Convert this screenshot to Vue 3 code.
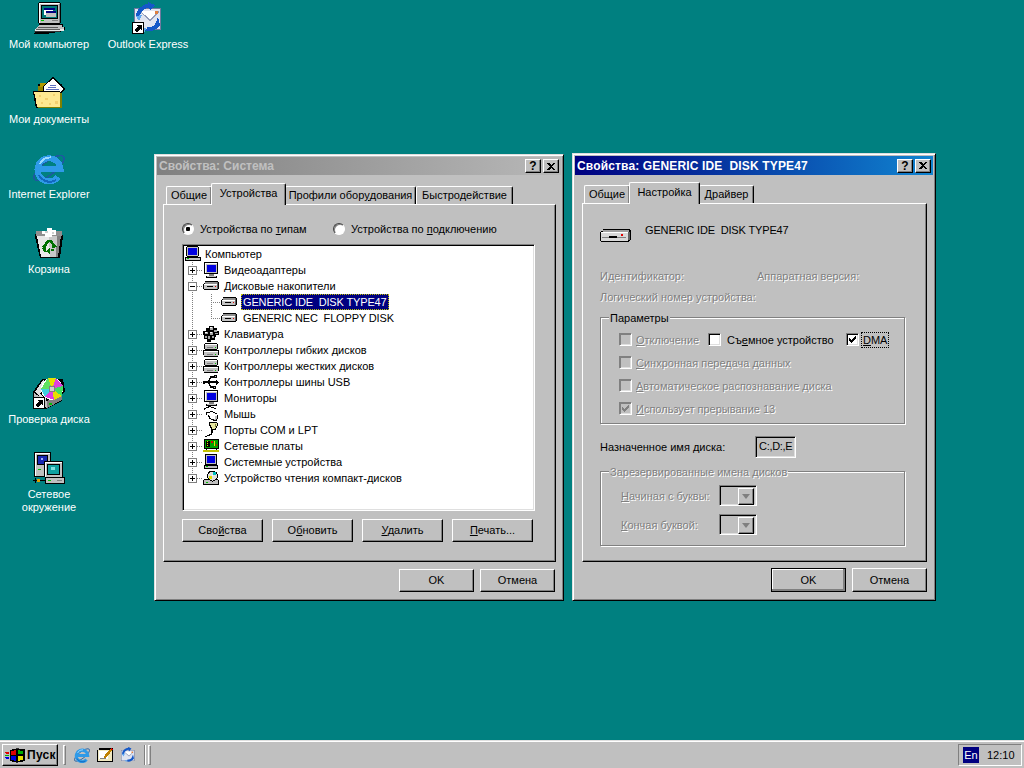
<template>
  <div class="screen">
    <svg class="sprites" aria-hidden="true">
      <defs>
        <symbol id="i-root" viewBox="0 0 16 16">
          <path fill="#000" d="M2 0h11v1h1v9h-1v1H2v-1H1V1h1z"/>
          <path fill="#c0c0c0" d="M2 1h11v9H2z"/>
          <path fill="#0000e0" d="M3 2h9v7H3z"/>
          <path fill="#000" d="M0 11h16v4H0z"/>
          <path fill="#c0c0c0" d="M1 12h14v2H1z"/>
          <path fill="#00c000" d="M2 12h2v1H2z"/>
        </symbol>
        <symbol id="i-monitor" viewBox="0 0 16 16">
          <path fill="#000" d="M1 0h14v12H1z"/>
          <path fill="#c0c0c0" d="M2 1h12v10H2z"/>
          <path fill="#fff" d="M2 1h12v1H3v9H2z"/>
          <path fill="#0000e0" d="M4 3h9v7H4z"/>
          <path fill="#808080" d="M6 12h5v2H6z"/>
          <path fill="#000" d="M3 14h11v2H3z"/>
          <path fill="#c0c0c0" d="M4 14h9v1H4z"/>
        </symbol>
        <symbol id="i-sys" viewBox="0 0 16 16">
          <path fill="#000" d="M2 0h12v11H2z"/>
          <path fill="#c0c0c0" d="M3 1h10v9H3z"/>
          <path fill="#0000e0" d="M4 2h8v7H4z"/>
          <path fill="#000" d="M1 11h14v4H1z"/>
          <path fill="#c0c0c0" d="M2 12h12v2H2z"/>
          <path fill="#00c000" d="M3 12h2v1H3z"/>
        </symbol>
        <symbol id="i-disk" viewBox="0 0 16 16">
          <path fill="#000" d="M2 3h13v1h1v7h-1v1H1v-1H0V6h1V5h1z"/>
          <path fill="#909090" d="M2 4h12v2H2z"/>
          <path fill="#c4c4c4" d="M1 6h13v5H1z"/>
          <path fill="#fff" d="M1 6h13v1H1z"/>
          <path fill="#606060" d="M14 4h1v7h-1z"/>
          <path fill="#000" d="M4 8h6v1H4z"/>
          <path fill="#e00000" d="M12 8h1v1h-1z"/>
        </symbol>
        <symbol id="i-keyboard" viewBox="0 0 16 16">
          <path fill="#000" d="M6 0h5v2h3v3h2v4h-3v2h-1v3H8v2H4v-3H1V9H0V5h3V2h3z"/>
          <path fill="#a8a8a8" d="M7 1h3v3H7zM11 4h3v2h-3zM2 6h3v2H2zM7 6h3v3H7zM12 7h3v1h-3zM5 10h2v3H5zM9 10h2v2H9zM2 10h2v2H2z"/>
          <path fill="#fff" d="M7 1h2v1H7zM2 6h2v1H2zM7 6h2v1H7z"/>
        </symbol>
        <symbol id="i-ctl" viewBox="0 0 16 16">
          <path fill="#000" d="M2 1h12v1h1v5h-1v1h2v5h-1v2H1v-2H0V8h2V7H1V2h1z"/>
          <path fill="#c0c0c0" d="M2 2h12v5H2zM1 9h14v5H1z"/>
          <path fill="#fff" d="M2 2h12v1H2zM1 9h14v1H1z"/>
          <path fill="#808080" d="M4 5h6v1H4zM4 12h6v1H4z"/>
          <path fill="#00c000" d="M12 5h1v1h-1zM12 12h1v1h-1z"/>
        </symbol>
        <symbol id="i-usb" viewBox="0 0 16 16">
          <path fill="none" stroke="#000" stroke-width="1.400" d="M1 8h14M5 8l3-5h3M5 8l3 5h2"/>
          <path fill="#000" d="M11 1h3v3h-3zM10 12h3v3h-3zM13 6h1v1h1v1h1v1h-1v1h-1v1h-1zM0 7h2v3H0z"/>
          <path fill="#c0c0c0" d="M12 2h1v1h-1zM11 13h1v1h-1z"/>
        </symbol>
        <symbol id="i-mouse" viewBox="0 0 16 16">
          <path fill="none" stroke="#000" d="M1 4C3 0 9 0 13 3"/>
          <path fill="#000" d="M3 6h4v-1h3v1h2v1h2v2h1v4h-1v2h-4v-1H8v-1H6v-2H5V9H3z"/>
          <path fill="#fff" d="M4 7h3V6h3v1h2v1h2v2h0v3h-1v1h-2v-1H8v-1H7v-2H6V9H4z"/>
          <path fill="#c0c0c0" d="M12 10h2v3h-1v1h-2v-1h1z"/>
        </symbol>
        <symbol id="i-port" viewBox="0 0 16 16">
          <path fill="none" stroke="#000" stroke-width="1.200" d="M9 8v3c0 3-3 1-5 3l-2 1"/>
          <path fill="#000" d="M6 0h8v1h1v3h-1v2h-1v2H8V6H7V4H6z"/>
          <path fill="#e8e8a0" d="M7 1h7v3h-1v2h-1v1H9V5H8V3H7z"/>
          <path fill="#808040" d="M12 2h1v3h-1z"/>
        </symbol>
        <symbol id="i-net" viewBox="0 0 16 16">
          <path fill="#000" d="M1 1h15v10h-2v3h-1v-3H4v3H3v-3H1z"/>
          <path fill="#00a000" d="M2 2h13v8H2z"/>
          <path fill="#000" d="M3 3h4v6H3z"/>
          <path fill="#e0e000" d="M4 3h1v1H4zM4 5h1v1H4zM4 7h1v1H4zM11 3h1v5h-1z"/>
          <path fill="#e00000" d="M8 3h2v2H8zM13 6h1v2h-1z"/>
          <path fill="#c0c000" d="M0 12h16v2H0z"/>
        </symbol>
        <symbol id="i-cd" viewBox="0 0 16 16">
          <path fill="#000" d="M1 9h14v1h1v5H0v-5h1z"/>
          <path fill="#c0c0c0" d="M1 10h14v4H1z"/>
          <path fill="#00c000" d="M3 12h2v1H3z"/>
          <circle cx="9.500" cy="6" r="5.500" fill="#000"/>
          <circle cx="9.500" cy="6" r="4.500" fill="#e0e0e0"/>
          <path fill="#00c0c0" d="M10 2h3v3h-3z"/>
          <path fill="#e0e000" d="M6 6h3v3H6z"/>
          <path fill="#fff" d="M9 5h1v1H9z"/>
        </symbol>
        <symbol id="i-arrow" viewBox="0 0 12 12">
          <path fill="#000" d="M0 0h12v12H0z"/>
          <path fill="#fff" d="M1 1h10v10H1z"/>
          <path fill="#000" d="M5 3h5v5H9V7H8v1H7v1H6v1H4V9H3V7h1V6h1V5h1V4H5z"/>
        </symbol>
        <symbol id="i-computer32" viewBox="0 0 32 32">
          <path fill="#000" d="M6 0h21v1h1v20h-1v1H6v-1H5V1h1z"/>
          <path fill="#c0c0c0" d="M6 1h21v20H6z"/>
          <path fill="#fff" d="M6 1h20v1H7v19H6z"/>
          <path fill="#808080" d="M26 2h1v19h-1z"/>
          <path fill="#000" d="M8 3h17v14H8z"/>
          <path fill="#007878" d="M9 4h15v12H9z"/>
          <path fill="#000080" d="M11 6h11v2H11z"/>
          <path fill="#fff" d="M11 8h9v5h-9z"/>
          <path fill="#c0c0c0" d="M13 10h10v5H13z"/>
          <path fill="#000080" d="M13 9h10v2H13z"/>
          <path fill="#00c000" d="M8 18h3v1H8z"/>
          <path fill="#808080" d="M19 18h6v1h-6z"/>
          <path fill="#000" d="M6 22h24v3h2v3h-1v1l-30 5v-3l1-1v-1l4-4z"/>
          <path fill="#c0c0c0" d="M6 23h23v2h2v2H2z"/>
          <path fill="#e8e8e8" d="M2 27h29v2H2z"/>
          <path fill="#404040" d="M5 25h20v1H5zM3 27h24v1H3zM1 29h26v1H1z" opacity=".8"/>
        </symbol>
        <symbol id="i-outlook32" viewBox="0 0 32 32">
          <path fill="#707aa0" d="M2 6h27v22H2z"/>
          <path fill="#e0e4f0" d="M3 7h25v20H3z"/>
          <path fill="#fff" d="M8 9h19l-9 8z"/>
          <path fill="#909ab8" d="M8 9l10 8 9-8v1l-9 9L8 10z"/>
          <path fill="#e08040" d="M23 9h3v3h-3z"/>
          <path fill="none" stroke="#1458c8" stroke-width="4" d="M6 15C6 8 12 4 19 3"/>
          <path fill="#1458c8" d="M16 0l7 3-5 6zM26 15l2 8c-3 5-8 7-14 6l1-4c5 1 8-2 9-5z"/>
          <path fill="#60a8f0" d="M4 14l6-1-3 6zM14 26l-5 1 4 3z"/>
        </symbol>
        <symbol id="i-docs32" viewBox="0 0 32 32">
          <path fill="#000" d="M5 7h7l2-2h6v2h9v3h2v2h-2v19H5z"/>
          <path fill="#908000" d="M5 9h24v21H5z"/>
          <path fill="#b09a00" d="M7 6h6v4H7z"/>
          <path fill="#000" d="M20 0l12 12-4 4H10V9z"/>
          <path fill="#fff" d="M20 2l10 10-3 3H11V9z"/>
          <path fill="#6070c0" d="M15 10h8v1h-8zM17 8h6v1h-6zM13 12h13v1H13z"/>
          <path fill="#000" d="M0 14h27v2h1v15H3v-2H2v-5H1v-6H0z"/>
          <path fill="#ffe890" d="M1 15h26v15H4v-3H3v-6H2v-4H1z"/>
          <path fill="#f4d070" d="M6 18h2v2H6zM12 21h3v2h-3zM20 17h2v2h-2zM8 25h2v2H8zM22 24h3v3h-3zM16 26h2v2h-2z"/>
          <path fill="#808000" d="M27 16h2v15H5v-1h22z"/>
        </symbol>
        <symbol id="i-ie32" viewBox="0 0 32 32">
          <ellipse cx="16" cy="16" rx="18.500" ry="6.500" transform="rotate(-38 16 16)" fill="none" stroke="#1c5aa0" stroke-width="1.600"/>
          <path d="M5 17H27.500A11.500 11.500 0 1 0 25 25" fill="none" stroke="#2e9ae8" stroke-width="6"/>
          <path d="M7 12A11 11 0 0 1 18 5.500" fill="none" stroke="#9ad8ff" stroke-width="2"/>
          <path d="M6 23A12 12 0 0 0 23 28" fill="none" stroke="#1268c0" stroke-width="2"/>
        </symbol>
        <symbol id="i-recycle32" viewBox="0 0 32 32">
          <path fill="#000" d="M3 5h26l1 5-3 21H7L2 10z"/>
          <path fill="#c8c8c8" d="M4 9h24l-3 21H8z"/>
          <path fill="#e8e8e8" d="M4 9h12l1 21H8z"/>
          <path fill="#808080" d="M24 9h4l-3 21h-2z"/>
          <path fill="#909090" d="M3 4h26v5H3z"/>
          <path fill="#fff" d="M14 1h5v2h4v5h-4v2h-7V7H9V4h5z"/>
          <path fill="#d0d0d0" d="M12 4h3v2h-3zM19 5h2v2h-2z"/>
          <path fill="none" stroke="#007000" stroke-width="2.600" d="M11 20l4-6h3l3 5M21 23h-3M13 25l-3-4"/>
          <path fill="#007000" d="M20 16l4 4-5 1zM17 21v6l-4-3zM8 19l6-1-2 5z"/>
        </symbol>
        <symbol id="i-scan32" viewBox="0 0 32 32">
          <path fill="#000" d="M9 2l21 0 2 12-3 3v7l-16 8-13-8v-9z"/>
          <path fill="#c0c0c0" d="M1 16l13 8v7L1 24z"/>
          <path fill="#808080" d="M14 24l15-8v7l-15 8z"/>
          <path fill="#e0e0e0" d="M2 15L10 3l3 2-6 12 7 5-3 1z"/>
          <path fill="#00c000" d="M16 26h3v2h-3z"/>
          <circle cx="19" cy="12" r="11" fill="#fff"/>
          <path fill="#e8e000" d="M19 12L15 1h8z"/>
          <path fill="#e040e0" d="M19 12l4-11 7 8z"/>
          <path fill="#40e060" d="M19 12l11-3-1 10z"/>
          <path fill="#e8e000" d="M19 12l10 7-8 4z"/>
          <path fill="#e040e0" d="M19 12l2 11-9-3z"/>
          <path fill="#40d0e0" d="M19 12l-7 8-4-8z"/>
          <path fill="#60e060" d="M19 12H8l7-11z"/>
          <circle cx="19" cy="12" r="3" fill="#d0d0d0" stroke="#808080"/>
        </symbol>
        <symbol id="i-network32" viewBox="0 0 32 32">
          <path fill="#000" d="M1 0h17v16h1v9h-5v3h-2v-3H1z"/>
          <path fill="#c0c0c0" d="M2 1h15v23H2z"/>
          <path fill="#fff" d="M2 1h15v1H3v22H2z"/>
          <path fill="#000" d="M4 3h11v10H4z"/>
          <path fill="#1828b0" d="M5 4h9v8H5z"/>
          <path fill="#a0b0ff" d="M8 6h2v2H8z"/>
          <path fill="#00c000" d="M5 17h3v1H5z"/>
          <path fill="#000" d="M11 9h19v16h2v7H12v-7h-1z"/>
          <path fill="#c0c0c0" d="M12 10h17v15H12zM13 26h18v5H13z"/>
          <path fill="#fff" d="M12 10h17v1H13v14h-1z"/>
          <path fill="#000" d="M14 12h13v11H14z"/>
          <path fill="#10a0a0" d="M15 13h11v9H15z"/>
          <path fill="#80e0e0" d="M18 15h4v3h-4z"/>
          <path fill="#00c000" d="M15 28h3v1h-3z"/>
          <path fill="#808080" d="M24 28h5v1h-5z"/>
          <path fill="#000" d="M0 28h13v1H0zM2 26h1v5H2z"/>
          <path fill="#e0a000" d="M4 27h3v3H4z"/>
        </symbol>
        <symbol id="i-flag" viewBox="0 0 22 16">
          <path fill="#000" d="M5 2l8-2 9 1v13l-9 2-8-2z"/>
          <path fill="#e00000" d="M7 3l5-1v5H7z"/>
          <path fill="#00b000" d="M14 2l6 1v4l-6-1z"/>
          <path fill="#0000e0" d="M7 9l5-1v6l-5-1z"/>
          <path fill="#e8e000" d="M14 8l6 1v4l-6 1z"/>
          <path fill="#e00000" d="M0 4h4v1H0zM1 5h3v1H1z"/>
          <path fill="#00b000" d="M0 7h4v1H0z"/>
          <path fill="#0000e0" d="M0 10h4v1H0zM1 11h3v1H1z"/>
        </symbol>
        <symbol id="i-desk" viewBox="0 0 16 16">
          <path fill="#000" d="M2 1h14v14H0V3h2z"/>
          <path fill="#f0e8c0" d="M1 3h14v11H1z"/>
          <path fill="#fff" d="M2 4h9v8H2z"/>
          <path fill="#808080" d="M3 11h6v1H3z"/>
          <path fill="#c08000" d="M8 8l6-7 2 1-6 8-3 1z"/>
          <path fill="#e00000" d="M14 1l2 1-1 1-2-1z"/>
        </symbol>
      </defs>
    </svg>

    <main class="desktop">
      <div
        v-for="item in desktopIcons"
        :key="item.label"
        class="desk-item"
        :style="{ left: item.x + 'px', top: item.y + 'px' }"
      >
        <div class="desk-icon">
          <svg class="px" width="32" height="32"><use :href="'#' + item.icon" /></svg>
          <svg v-if="item.shortcut" class="px desk-shortcut" width="12" height="12"><use href="#i-arrow" /></svg>
        </div>
        <span class="desk-label">{{ item.label }}</span>
      </div>

      <!-- Свойства: Система -->
      <section class="window win-system">
        <header class="title inactive">
          <span class="title-text">Свойства: Система</span>
          <span class="title-btn"><b>?</b></span>
          <span class="title-btn close"><svg width="8" height="7" class="px"><path d="M0 0h2l2 2 2-2h2v1L5 3.500 8 6v1H6L4 5 2 7H0V6l3-2.500L0 1z" fill="#000"/></svg></span>
        </header>

        <nav class="tabs">
          <div
            v-for="t in systemTabs"
            :key="t.label"
            class="tab"
            :class="{ active: t.active }"
            :style="{ width: t.w + 'px' }"
            v-html="t.label"
          ></div>
        </nav>

        <div class="panel sys-panel">
          <div class="radios">
            <label class="radio-item first"><span class="radio on"></span><span>Устройства по <u>т</u>ипам</span></label>
            <label class="radio-item"><span class="radio"></span><span>Устройства по <u>п</u>одключению</span></label>
          </div>

          <div class="tree sunken">
            <div class="tree-row root">
              <svg class="px" width="16" height="16"><use href="#i-root" /></svg>
              <span class="tree-text">Компьютер</span>
            </div>
            <div class="tree-kids">
              <template v-for="row in treeRows" :key="row.label">
                <div class="tree-row">
                  <span class="expander">
                    <svg class="px" width="7" height="7"><path d="M1 3h5v1H1z" fill="#000"/><path v-if="!row.open" d="M3 1h1v5H3z" fill="#000"/></svg>
                  </span>
                  <span class="dots"></span>
                  <svg class="px" width="16" height="16"><use :href="'#' + row.icon" /></svg>
                  <span class="tree-text">{{ row.label }}</span>
                </div>
                <div v-if="row.open" class="tree-sub">
                  <div v-for="d in row.children" :key="d" class="tree-row sub">
                    <span class="dots long"></span>
                    <svg class="px" width="16" height="16"><use href="#i-disk" /></svg>
                    <span class="tree-text device" :class="{ picked: d === deviceName }">{{ d }}</span>
                  </div>
                </div>
              </template>
            </div>
          </div>

          <div class="tree-buttons">
            <button class="btn"><span>Сво<u>й</u>ства</span></button>
            <button class="btn"><span>О<u>б</u>новить</span></button>
            <button class="btn"><span><u>У</u>далить</span></button>
            <button class="btn"><span><u>П</u>ечать...</span></button>
          </div>
        </div>

        <footer class="footer">
          <button class="btn wide">OK</button>
          <button class="btn wide">Отмена</button>
        </footer>
      </section>

      <!-- Свойства: GENERIC IDE DISK TYPE47 -->
      <section class="window win-disk">
        <header class="title active">
          <span class="title-text">{{ 'Свойства: ' + deviceName }}</span>
          <span class="title-btn"><b>?</b></span>
          <span class="title-btn close"><svg width="8" height="7" class="px"><path d="M0 0h2l2 2 2-2h2v1L5 3.500 8 6v1H6L4 5 2 7H0V6l3-2.500L0 1z" fill="#000"/></svg></span>
        </header>

        <nav class="tabs">
          <div
            v-for="t in diskTabs"
            :key="t.label"
            class="tab"
            :class="{ active: t.active }"
            :style="{ width: t.w + 'px' }"
          >{{ t.label }}</div>
        </nav>

        <div class="panel disk-panel">
          <div class="disk-head">
            <svg class="px" width="31" height="15" viewBox="0 0 31 15">
              <path fill="#000" d="M3 1h27v1h1v10h-1v1h-1v1H1v-1H0V4h1V3h2z"/>
              <path fill="#a0a0a0" d="M3 2h26v2H3z"/>
              <path fill="#d8d8d8" d="M1 4h27v9H1z"/>
              <path fill="#fff" d="M1 4h27v1H1z"/>
              <path fill="#606060" d="M28 4h2v8h-2z"/>
              <path fill="#808080" d="M2 9h24v1H2z"/>
              <path fill="#000" d="M9 8h8v2H9z"/>
              <path fill="#e00000" d="M21 6h2v2h-2z"/>
            </svg>
            <span class="device-name">{{ deviceName }}</span>
          </div>

          <div class="info-row first">
            <span class="off id-label">Идентификатор:</span>
            <span class="off">Аппаратная версия:</span>
          </div>
          <div class="info-row second off">Логический номер устройства:</div>

          <div class="group params">
            <div class="legend">Параметры</div>
            <div class="check-row top">
              <label class="check off-check"><span class="box"></span><span class="off"><u>О</u>тключение</span></label>
              <label class="check removable"><span class="box live"></span><span>Съ<u>е</u>мное устройство</span></label>
              <label class="check dma">
                <span class="box live">
                  <svg class="px" width="9" height="9"><path d="M1 3h1v1h1v1h1V4h1V3h1V2h1V1h1v3H7v1H6v1H5v1H4v1H3V7H2V6H1z" fill="#000"/></svg>
                </span>
                <span class="focus"><u>D</u>MA</span>
              </label>
            </div>
            <div class="check-row"><label class="check"><span class="box"></span><span class="off"><u>С</u>инхронная передача данных</span></label></div>
            <div class="check-row"><label class="check"><span class="box"></span><span class="off"><u>А</u>втоматическое распознавание диска</span></label></div>
            <div class="check-row">
              <label class="check">
                <span class="box">
                  <svg class="px" width="9" height="9"><path d="M1 3h1v1h1v1h1V4h1V3h1V2h1V1h1v3H7v1H6v1H5v1H4v1H3V7H2V6H1z" fill="#808080"/></svg>
                </span>
                <span class="off"><u>И</u>спользует прерывание 13</span>
              </label>
            </div>
          </div>

          <div class="name-row">
            <span class="name-label">Назначенное имя диска:</span>
            <span class="name-field sunken">C:,D:,E</span>
          </div>

          <div class="group reserved">
            <div class="legend off">Зарезервированные имена дисков</div>
            <div class="select-row top">
              <span class="off select-label"><u>Н</u>ачиная с буквы:</span>
              <span class="select sunken"><span class="select-arrow"></span></span>
            </div>
            <div class="select-row">
              <span class="off select-label"><u>К</u>ончая буквой:</span>
              <span class="select sunken"><span class="select-arrow"></span></span>
            </div>
          </div>
        </div>

        <footer class="footer">
          <button class="btn wide default">OK</button>
          <button class="btn wide">Отмена</button>
        </footer>
      </section>
    </main>

    <footer class="taskbar">
      <button class="btn start">
        <svg class="px" width="20" height="15" viewBox="0 0 22 16"><use href="#i-flag" /></svg>
        <b>Пуск</b>
      </button>
      <span class="grip first-grip"></span>
      <div class="quick">
        <svg width="16" height="16"><use href="#i-ie32" /></svg>
        <svg class="px" width="16" height="16"><use href="#i-desk" /></svg>
        <svg width="16" height="16"><use href="#i-outlook32" /></svg>
      </div>
      <span class="sep"></span>
      <span class="grip"></span>
      <div class="tray">
        <span class="lang">En</span>
        <span class="clock">12:10</span>
      </div>
    </footer>
  </div>
</template>

<script setup>
const deviceName = 'GENERIC IDE  DISK TYPE47'

const desktopIcons = [
  { label: 'Мой компьютер', icon: 'i-computer32', x: -1, y: 2 },
  { label: 'Outlook Express', icon: 'i-outlook32', x: 98, y: 2, shortcut: true },
  { label: 'Мои документы', icon: 'i-docs32', x: -1, y: 77 },
  { label: 'Internet Explorer', icon: 'i-ie32', x: -1, y: 152 },
  { label: 'Корзина', icon: 'i-recycle32', x: -1, y: 227 },
  { label: 'Проверка диска', icon: 'i-scan32', x: -1, y: 377, shortcut: true },
  { label: 'Сетевое\nокружение', icon: 'i-network32', x: -1, y: 452 }
]

const systemTabs = [
  { label: 'Общие', w: 46 },
  { label: 'Устройства', w: 75, active: true },
  { label: 'Профили обор<u>у</u>дования', w: 131 },
  { label: 'Быстродействие', w: 97 }
]

const diskTabs = [
  { label: 'Общие', w: 46 },
  { label: 'Настройка', w: 71, active: true },
  { label: 'Драйвер', w: 55 }
]

const treeRows = [
  { label: 'Видеоадаптеры', icon: 'i-monitor' },
  {
    label: 'Дисковые накопители',
    icon: 'i-disk',
    open: true,
    children: [deviceName, 'GENERIC NEC  FLOPPY DISK']
  },
  { label: 'Клавиатура', icon: 'i-keyboard' },
  { label: 'Контроллеры гибких дисков', icon: 'i-ctl' },
  { label: 'Контроллеры жестких дисков', icon: 'i-ctl' },
  { label: 'Контроллеры шины USB', icon: 'i-usb' },
  { label: 'Мониторы', icon: 'i-monitor' },
  { label: 'Мышь', icon: 'i-mouse' },
  { label: 'Порты COM и LPT', icon: 'i-port' },
  { label: 'Сетевые платы', icon: 'i-net' },
  { label: 'Системные устройства', icon: 'i-sys' },
  { label: 'Устройство чтения компакт-дисков', icon: 'i-cd' }
]
</script>

<style>
html, body { margin: 0; background: #008080; }
</style>

<style scoped>
.screen {
  width: 1024px;
  height: 768px;
  display: flex;
  flex-direction: column;
  overflow: hidden;
  font-family: "Liberation Sans", Arial, sans-serif;
  font-size: 11px;
  line-height: 14px;
  color: #000;
  background: #008080;
}
.sprites { position: absolute; width: 0; height: 0; }
.px { shape-rendering: crispEdges; display: block; flex: none; }
u { text-underline-offset: 1px; }

.desktop { position: relative; flex: 1; }

/* desktop icons */
.desk-item {
  position: absolute;
  width: 100px;
  display: flex;
  flex-direction: column;
  align-items: center;
  color: #fff;
  text-align: center;
}
.desk-icon { position: relative; width: 32px; height: 32px; }
.desk-shortcut { position: absolute; left: 0; bottom: 0; }
.desk-label { margin-top: 4px; line-height: 13px; white-space: pre-line; }

/* windows */
.window {
  position: absolute;
  box-sizing: border-box;
  padding: 2px;
  background: #c0c0c0;
  border: 1px solid;
  border-color: #dfdfdf #000 #000 #dfdfdf;
  box-shadow: inset 1px 1px 0 #fff, inset -1px -1px 0 #808080;
  display: flex;
  flex-direction: column;
}
.win-system { left: 154px; top: 154px; width: 410px; height: 447px; }
.win-disk { left: 572px; top: 153px; width: 364px; height: 448px; }

.title {
  height: 18px;
  flex: none;
  display: flex;
  align-items: center;
  padding: 0 2px;
  color: #fff;
  font-weight: bold;
  font-size: 12px;
}
.win-disk .title { height: 19px; }
.win-disk .title-text { letter-spacing: 0.15px; }
.title.inactive { background: linear-gradient(90deg, #808080, #b8b8b8); color: #c0c0c0; }
.title.active { background: linear-gradient(90deg, #000080, #1084d0); }
.title-text { flex: 1; white-space: pre; }
.title-btn {
  box-sizing: border-box;
  width: 16px;
  height: 14px;
  background: #c0c0c0;
  border: 1px solid;
  border-color: #fff #000 #000 #fff;
  box-shadow: inset -1px -1px 0 #808080;
  display: flex;
  align-items: center;
  justify-content: center;
  color: #000;
}
.title-btn b { font-size: 12px; line-height: 12px; }
.title-btn.close { margin-left: 2px; }

/* tabs */
.tabs {
  flex: none;
  display: flex;
  align-items: flex-end;
  height: 21px;
  margin: 8px 0 0 9px;
  position: relative;
  z-index: 1;
}
.win-disk .tabs { margin: 7px 0 0 9px; }
.tab {
  box-sizing: border-box;
  height: 18px;
  padding-bottom: 1px;
  display: flex;
  align-items: center;
  justify-content: center;
  white-space: pre;
  background: #c0c0c0;
  border: 1px solid #fff;
  border-bottom: none;
  border-right-color: #000;
  border-radius: 2px 2px 0 0;
  box-shadow: inset -1px 0 0 #808080;
}
.tab.active {
  height: 22px;
  margin: 0 -1px -1px -1px;
  padding-bottom: 4px;
  position: relative;
  z-index: 2;
}

.panel {
  flex: none;
  box-sizing: border-box;
  height: 358px;
  background: #c0c0c0;
  border: 1px solid;
  border-color: #fff #000 #000 #fff;
  box-shadow: inset -1px -1px 0 #808080;
}
.sys-panel { margin-left: 6px; width: 393px; padding: 17px 20px 0 18px; }
.disk-panel { margin-left: 7px; width: 345px; height: 359px; padding: 24px 20px 0 17px; }

.radios { display: flex; align-items: center; height: 14px; }
.radio-item { display: flex; align-items: center; gap: 6px; }
.radio-item.first { width: 151px; }
.radio {
  box-sizing: border-box;
  width: 12px;
  height: 12px;
  border-radius: 50%;
  background: #fff;
  border: 1px solid;
  border-color: #404040 #fff #fff #404040;
  box-shadow: inset 1px 1px 0 #808080;
  flex: none;
}
.radio.on { background: radial-gradient(circle, #000 0 2px, #fff 2.500px); }

.sunken {
  box-sizing: border-box;
  border: 1px solid;
  border-color: #808080 #fff #fff #808080;
  box-shadow: inset 1px 1px 0 #000, inset -1px -1px 0 #dfdfdf;
}

.tree {
  margin-top: 8px;
  height: 267px;
  width: 353px;
  padding-top: 1px;
  background: #fff;
}
.tree-row {
  display: flex;
  align-items: center;
  height: 16px;
  white-space: pre;
}
.tree-row.root { padding-left: 2px; }
.tree-text { margin-left: 5px; }
.root .tree-text { margin-left: 4px; }

.tree-kids {
  background:
    repeating-linear-gradient(180deg, #808080 0 1px, transparent 1px 2px)
    9px 0 / 1px calc(100% - 8px) no-repeat;
}
.expander {
  box-sizing: border-box;
  width: 9px;
  height: 9px;
  margin-left: 5px;
  flex: none;
  background: #fff;
  border: 1px solid #808080;
}
.dots {
  width: 6px;
  height: 1px;
  flex: none;
  background: repeating-linear-gradient(90deg, #808080 0 1px, transparent 1px 2px);
}
.tree-sub {
  margin-left: 28px;
  background:
    repeating-linear-gradient(180deg, #808080 0 1px, transparent 1px 2px)
    0 0 / 1px calc(100% - 8px) no-repeat;
}
.dots.long { width: 10px; }
.device { margin-left: 4px; padding: 0 2px; line-height: 16px; letter-spacing: -0.15px; }
.device.picked { background: #000080; color: #fff; outline: 1px dotted #c0c000; outline-offset: -1px; }

.btn {
  box-sizing: border-box;
  padding: 0 0 1px;
  height: 23px;
  font: inherit;
  color: #000;
  background: #c0c0c0;
  border: 1px solid;
  border-color: #fff #000 #000 #fff;
  box-shadow: inset -1px -1px 0 #808080;
}
.tree-buttons {
  margin-top: 8px;
  display: grid;
  grid-template-columns: repeat(4, 81px);
  column-gap: 9px;
}

.footer {
  flex: none;
  margin-top: 6px;
  padding-right: 6px;
  display: flex;
  justify-content: flex-end;
  gap: 6px;
}
.win-system .footer { margin-top: 7px; }
.btn.wide { width: 75px; height: 24px; }
.win-system .btn.wide { height: 23px; }
.btn.default { outline: 1px solid #000; outline-offset: -1px; box-shadow: inset -2px -2px 0 #808080, inset 1px 1px 0 #fff; }

/* second window content */
.disk-head { display: flex; align-items: flex-start; gap: 14px; height: 15px; }
.device-name { white-space: pre; line-height: 14px; margin-top: -5px; letter-spacing: -0.15px; }
.off { color: #808080; text-shadow: 1px 1px 0 #fff; }
.off u { text-decoration-color: #808080; }
.info-row { display: flex; height: 14px; white-space: nowrap; }
.info-row.first { margin-top: 26px; }
.info-row.second { margin-top: 7px; }
.id-label { width: 157px; }

.group {
  box-sizing: border-box;
  width: 305px;
  border: 1px solid #808080;
  box-shadow: inset 1px 1px 0 #fff, 1px 1px 0 #fff;
}
.params { margin-top: 13px; height: 107px; }
.reserved { margin-top: 13px; height: 75px; }
.legend {
  width: fit-content;
  height: 14px;
  margin: -7px 0 0 8px;
  padding: 0 1px;
  background: #c0c0c0;
}
.check-row { display: flex; align-items: center; height: 23px; padding-left: 18px; white-space: nowrap; }
.check-row.top { margin-top: 3px; }
.check { display: flex; align-items: center; gap: 4px; }
.off-check { width: 89px; }
.removable { width: 138px; gap: 6px; }
.dma { gap: 3px; }
.box {
  box-sizing: border-box;
  width: 13px;
  height: 13px;
  flex: none;
  display: flex;
  align-items: center;
  justify-content: center;
  background: #c0c0c0;
  border: 1px solid;
  border-color: #808080 #fff #fff #808080;
  box-shadow: inset 1px 1px 0 #000, inset -1px -1px 0 #dfdfdf;
}
.box:not(.live) { box-shadow: inset 1px 1px 0 #808080, inset -1px -1px 0 #dfdfdf; }
.box.live { background: #fff; }
.focus { outline: 1px dotted #000; padding: 0 1px; line-height: 14px; }

.name-row { margin-top: 12px; display: flex; align-items: center; height: 22px; }
.name-label { width: 155px; }
.name-field {
  width: 41px;
  height: 22px;
  padding-left: 3px;
  line-height: 18px;
  letter-spacing: -0.3px;
  white-space: nowrap;
}

.select-row { display: flex; align-items: center; height: 21px; padding-left: 20px; }
.select-row.top { margin-top: 6px; margin-bottom: 8px; }
.select-label { width: 98px; }
.select {
  width: 38px;
  height: 21px;
  display: flex;
  justify-content: flex-end;
  padding: 2px;
}
.select-arrow {
  box-sizing: border-box;
  width: 16px;
  height: 17px;
  background: #c0c0c0;
  border: 1px solid;
  border-color: #fff #000 #000 #fff;
  box-shadow: inset -1px -1px 0 #808080;
  position: relative;
}
.select-arrow::after {
  content: "";
  position: absolute;
  left: 3px;
  top: 5px;
  border: 4px solid transparent;
  border-top: 5px solid #808080;
  border-bottom: none;
}

/* taskbar */
.taskbar {
  flex: none;
  box-sizing: border-box;
  height: 28px;
  padding: 3px 2px 2px;
  display: flex;
  align-items: center;
  background: #c0c0c0;
  border-top: 1px solid #dfdfdf;
  box-shadow: inset 0 1px 0 #fff;
}
.btn.start {
  width: 56px;
  height: 22px;
  display: flex;
  align-items: center;
  padding: 0 0 0 2px;
  gap: 2px;
  font-size: 12px;
}
.btn.start b { letter-spacing: 0.3px; }
.grip {
  width: 3px;
  height: 20px;
  box-sizing: border-box;
  margin-left: 2px;
  border: 1px solid;
  border-color: #fff #808080 #808080 #fff;
}
.first-grip { margin-left: 5px; }
.sep {
  width: 2px;
  height: 20px;
  box-sizing: border-box;
  border-left: 1px solid #808080;
  border-right: 1px solid #fff;
}
.quick { display: flex; gap: 7px; margin: 0 8px; width: 62px; }
.tray {
  margin-left: auto;
  box-sizing: border-box;
  width: 64px;
  height: 22px;
  display: flex;
  align-items: center;
  padding-left: 4px;
  border: 1px solid;
  border-color: #808080 #fff #fff #808080;
}
.lang {
  width: 16px;
  height: 16px;
  background: #000080;
  color: #fff;
  text-align: center;
  line-height: 16px;
}
.clock { margin-left: 8px; }
</style>
